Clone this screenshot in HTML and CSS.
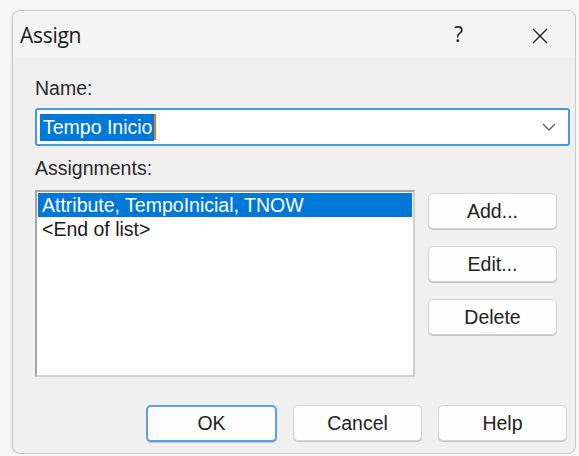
FILE: index.html
```html
<!DOCTYPE html>
<html lang="en">
<head>
<meta charset="utf-8">
<title>Assign</title>
<link rel="stylesheet" href="styles.css">
</head>
<body>
<div class="window">
  <div class="titlebar">
    <span class="title">Assign</span>
    <span class="tb-help">?</span>
    <span class="tb-close">
      <svg width="16" height="16" viewBox="0 0 16 16"><path d="M1 1L15 15M15 1L1 15" stroke="#1a1a1a" stroke-width="1.3" fill="none"/></svg>
    </span>
  </div>
  <div class="content">
    <div class="label">Name:</div>
    <div class="combo">
      <span class="combo-text"><span class="sel">Tempo Inicio</span><span class="caret"></span></span>
      <svg class="chev" width="14" height="8" viewBox="0 0 14 8"><path d="M1 1L7 7L13 1" stroke="#606060" stroke-width="1.3" fill="none"/></svg>
    </div>
    <div class="label label-assign">Assignments:</div>
    <div class="mid">
      <div class="listbox">
        <div class="row selected">Attribute, TempoInicial, TNOW</div>
        <div class="row">&lt;End of list&gt;</div>
      </div>
      <div class="side">
        <button class="btn">Add...</button>
        <button class="btn">Edit...</button>
        <button class="btn">Delete</button>
      </div>
    </div>
    <div class="footer">
      <button class="btn btn-default">OK</button>
      <button class="btn">Cancel</button>
      <button class="btn">Help</button>
    </div>
  </div>
</div>
</body>
</html>
```
FILE: styles.css
```css
html, body {
  margin: 0;
  padding: 0;
  background: #f7f7f7;
}
body {
  padding: 10px 0 0 12px;
  font-family: "Liberation Sans", Arial, sans-serif;
  font-size: 19.5px;
  color: #222;
}
.window {
  width: 562px;
  height: 442px;
  border: 1px solid #c8c8c8;
  border-radius: 8px;
  background: #f0f0f0;
  display: flex;
  flex-direction: column;
  overflow: hidden;
  box-shadow: -1px 0 2px rgba(0,0,0,0.08);
}
.titlebar {
  height: 46px;
  background: #f3f3f3;
  display: flex;
  align-items: center;
  padding-left: 7px;
  flex-shrink: 0;
}
.title {
  font-family: "Open Sans", "Noto Sans", sans-serif;
  font-size: 21px;
  letter-spacing: -0.3px;
  color: #1a1a1a;
  flex: 1;
  margin-top: 2px;
}
.tb-help {
  font-family: "Open Sans", sans-serif;
  font-size: 21px;
  color: #1a1a1a;
  width: 20px;
  margin-right: 58px;
  margin-top: -1px;
}
.tb-close {
  display: flex;
  margin-right: 27px;
  margin-top: 4px;
}
.content {
  padding: 20px 5px 0 22px;
  display: flex;
  flex-direction: column;
}
.label {
  height: 22px;
  line-height: 22px;
  color: #2a2a2a;
}
.combo {
  margin-top: 9px;
  height: 34px;
  border: 2px solid #4a98e0;
  border-radius: 3px;
  background: #fff;
  display: flex;
  align-items: center;
  padding: 0 12px 0 3px;
}
.combo-text {
  flex: 1;
  display: flex;
  align-items: center;
}
.sel {
  background: #0078d7;
  color: #fff;
  padding: 2px 2px 3px 3px;
  line-height: 22px;
}
.caret {
  width: 2px;
  height: 26px;
  background: #e07820;
}
.chev {
  display: block;
}
.label-assign {
  margin-top: 11px;
}
.mid {
  margin-top: 11px;
  display: flex;
  gap: 13px;
}
.listbox {
  width: 374px;
  height: 181px;
  background: #fff;
  border: 2px solid #a5a5a5;
  border-right-color: #d0d0d0;
  border-bottom-color: #d0d0d0;
  padding: 1px;
}
.row {
  height: 24px;
  line-height: 24px;
  padding-left: 4px;
  color: #1a1a1a;
}
.row.selected {
  background: #0078d7;
  color: #fff;
}
.side {
  display: flex;
  flex-direction: column;
  gap: 17px;
  padding-top: 3px;
}
.btn {
  width: 129px;
  height: 36px;
  font-family: "Liberation Sans", Arial, sans-serif;
  font-size: 19.5px;
  color: #222;
  background: #fdfdfd;
  border: 1px solid #d2d2d2;
  border-radius: 5px;
  padding: 0;
  box-shadow: 0 1px 0 #c4c4c4;
}
.footer {
  margin-top: 28px;
  display: flex;
  justify-content: flex-end;
  gap: 16px;
  padding-right: 3px;
}
.btn-default {
  border: 2px solid #5c9ee0;
  width: 131px;
  height: 37px;
}
```
